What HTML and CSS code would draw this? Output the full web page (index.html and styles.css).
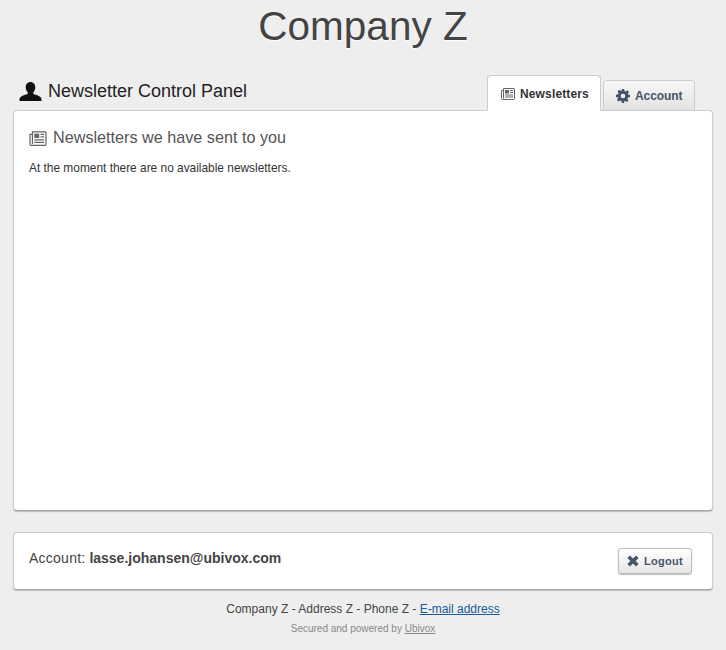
FILE: index.html
```html
<!DOCTYPE html>
<html lang="en">
<head>
<meta charset="utf-8">
<title>Company Z</title>
<link rel="stylesheet" href="styles.css">
</head>
<body>
<div class="page">
  <h1 class="brand">Company Z</h1>
  <div class="topbar">
    <h2 class="panel-title">
      <svg class="icon-user" viewBox="0 0 22 19"><path d="M11 0c3 0 4.800 2.300 4.800 5.300 0 2-.8 3.800-1.900 5-.5.600-.4 1.300.3 1.700 2.300 1.200 7.800 2 7.800 5.200V19H0v-1.800c0-3.200 5.500-4 7.800-5.200.7-.4.800-1.100.3-1.700-1.100-1.200-1.900-3-1.900-5C6.200 2.300 8 0 11 0z"/></svg>
      <span>Newsletter Control Panel</span>
    </h2>
    <nav class="tabs">
      <a class="tab tab-active">
        <svg class="icon-news" viewBox="0 0 14 13"><path class="news-line" d="M2.500 1.500h10.500a.5.500 0 0 1 .5.500v9.500a1 1 0 0 1-1 1H1.500a1 1 0 0 1-1-1V3.500h2z"/><path class="news-line" d="M2.500 3.500v8"/><rect class="news-fill" x="4" y="3" width="4" height="3.500"/><path class="news-line" d="M9 3.500h3M9 5.500h3M4 8h8M4 10h8"/></svg>
        <span>Newsletters</span>
      </a>
      <a class="tab tab-other">
        <svg class="icon-cog" viewBox="0 0 24 24"><path fill-rule="evenodd" d="M10 0h4l.6 3.300c.8.200 1.500.500 2.200.900l2.800-1.900 2.800 2.800-1.900 2.800c.4.700.7 1.400.9 2.200L24 10v4l-3.600.6c-.2.800-.5 1.500-.9 2.200l1.900 2.800-2.800 2.800-2.800-1.900c-.7.400-1.400.7-2.200.9L14 24h-4l-.6-3.600c-.8-.2-1.500-.5-2.200-.9l-2.800 1.900-2.800-2.800 1.900-2.800c-.4-.7-.7-1.400-.9-2.200L0 14v-4l3.600-.9c.2-.8.500-1.500.9-2.200L2.600 4.100l2.800-2.800 2.800 1.900c.7-.4 1.400-.7 2.200-.9zM12 8a4 4 0 1 0 0 8 4 4 0 0 0 0-8z"/></svg>
        <span>Account</span>
      </a>
    </nav>
  </div>
  <section class="card card-main">
    <h3 class="section-title">
      <svg class="icon-news icon-news-lg" viewBox="0 0 14 13"><path class="news-line" d="M2.500 1.500h10.500a.5.500 0 0 1 .5.500v9.500a1 1 0 0 1-1 1H1.500a1 1 0 0 1-1-1V3.500h2z"/><path class="news-line" d="M2.500 3.500v8"/><rect class="news-fill" x="4" y="3" width="4" height="3.500"/><path class="news-line" d="M9 3.500h3M9 5.500h3M4 8h8M4 10h8"/></svg>
      <span>Newsletters we have sent to you</span>
    </h3>
    <p class="empty">At the moment there are no available newsletters.</p>
  </section>
  <section class="card card-account">
    <p class="account"><span class="account-label">Account:</span> <strong>lasse.johansen@ubivox.com</strong></p>
    <a class="logout">
      <svg class="icon-x" viewBox="0 0 12 12"><path d="M3 .4 6 3.400 9 .4l2.600 2.600-3 3 3 3L9 11.600l-3-3-3 3L.4 9l3-3-3-3z"/></svg>
      <span>Logout</span>
    </a>
  </section>
  <footer class="footer">
    <p class="footer-main">Company Z - Address Z - Phone Z - <a class="link-blue" href="#">E-mail address</a></p>
    <p class="footer-small">Secured and powered by <a class="link-grey" href="#">Ubivox</a></p>
  </footer>
</div>
</body>
</html>
```
FILE: styles.css
```css
* { box-sizing: border-box; }
html, body { margin: 0; padding: 0; }
body {
  background: #eeeeee;
  font-family: "Liberation Sans", Arial, sans-serif;
  color: #333;
  height: 650px;
  overflow: hidden;
}
.page { padding: 0 13px; }
.brand {
  margin: 0;
  height: 75px;
  padding-top: 1px;
  text-align: center;
  font-size: 40.500px;
  line-height: 50px;
  font-weight: 400;
  color: #444;
  text-shadow: 0 1px 1px #fff;
}
.topbar {
  display: flex;
  justify-content: space-between;
  align-items: flex-end;
  height: 36px;
  padding: 0 18px 0 6px;
  position: relative;
  z-index: 1;
  margin-bottom: -1px;
}
.panel-title {
  margin: 0 0 8px;
  display: flex;
  align-items: center;
  gap: 6px;
  font-size: 18px;
  line-height: 24px;
  font-weight: 400;
  color: #222;
}
.icon-user { width: 23px; height: 19px; fill: #111; }
.tabs { display: flex; align-items: flex-end; gap: 2px; }
.tab {
  display: flex;
  align-items: center;
  border: 1px solid #ccc;
  border-radius: 4px 4px 0 0;
  font-size: 12px;
  font-weight: 700;
}
.tab-other {
  gap: 5px;
  width: 92px;
  height: 31px;
  padding: 0 0 0 12px;
  background: linear-gradient(#f8f8f8, #e2e2e2);
  color: #45546a;
  letter-spacing: -.1px;
}
.tab-active {
  gap: 5px;
  height: 36px;
  width: 114px;
  padding: 1px 0 0 13px;
  background: #fff;
  border-bottom-color: #fff;
  color: #333;
  letter-spacing: .14px;
}
.icon-news { width: 14px; height: 13px; flex: none; }
.icon-news-lg { width: 18px; height: 16px; }
.news-line { fill: none; stroke: #666; stroke-width: 1; }
.news-fill { fill: #666; }
.icon-cog { width: 14px; height: 14px; fill: #45546a; flex: none; }
.card {
  background: #fff;
  border: 1px solid #ccc;
  border-bottom-color: #aaa;
  border-radius: 4px;
  box-shadow: 0 1px 1px #bbb;
}
.card-main { height: 401px; padding: 16px 15px; }
.section-title {
  margin: 0;
  display: flex;
  align-items: center;
  gap: 6px;
  font-size: 16.200px;
  line-height: 21px;
  font-weight: 400;
  color: #555;
}
.empty { margin: 12px 0 0; font-size: 11.900px; line-height: 16px; color: #333; }
.card-account {
  margin-top: 21px;
  height: 58px;
  padding: 0 20px 0 15px;
  display: flex;
  justify-content: space-between;
  align-items: center;
}
.account { margin: 0 0 6px; font-size: 14px; line-height: 20px; color: #444; }
.account-label { letter-spacing: .25px; }
.account strong { color: #444; }
.logout {
  display: flex;
  align-items: center;
  gap: 5px;
  width: 74px;
  height: 26px;
  padding-left: 8px;
  border: 1px solid #bbb;
  border-radius: 3px;
  background: linear-gradient(#fff, #e6e6e6);
  box-shadow: 0 1px 1px #bbb;
  font-size: 11px;
  font-weight: 700;
  letter-spacing: .3px;
  color: #45546a;
}
.icon-x { width: 12px; height: 12px; fill: #45546a; flex: none; }
.footer { text-align: center; }
.footer-main { margin: 11px 0 0; font-size: 12px; line-height: 16px; color: #444; }
.footer-small { margin: 5px 0 0; font-size: 10px; line-height: 14px; color: #888; }
.link-blue { color: #1a5a9c; }
.link-grey { color: #888; }
```
